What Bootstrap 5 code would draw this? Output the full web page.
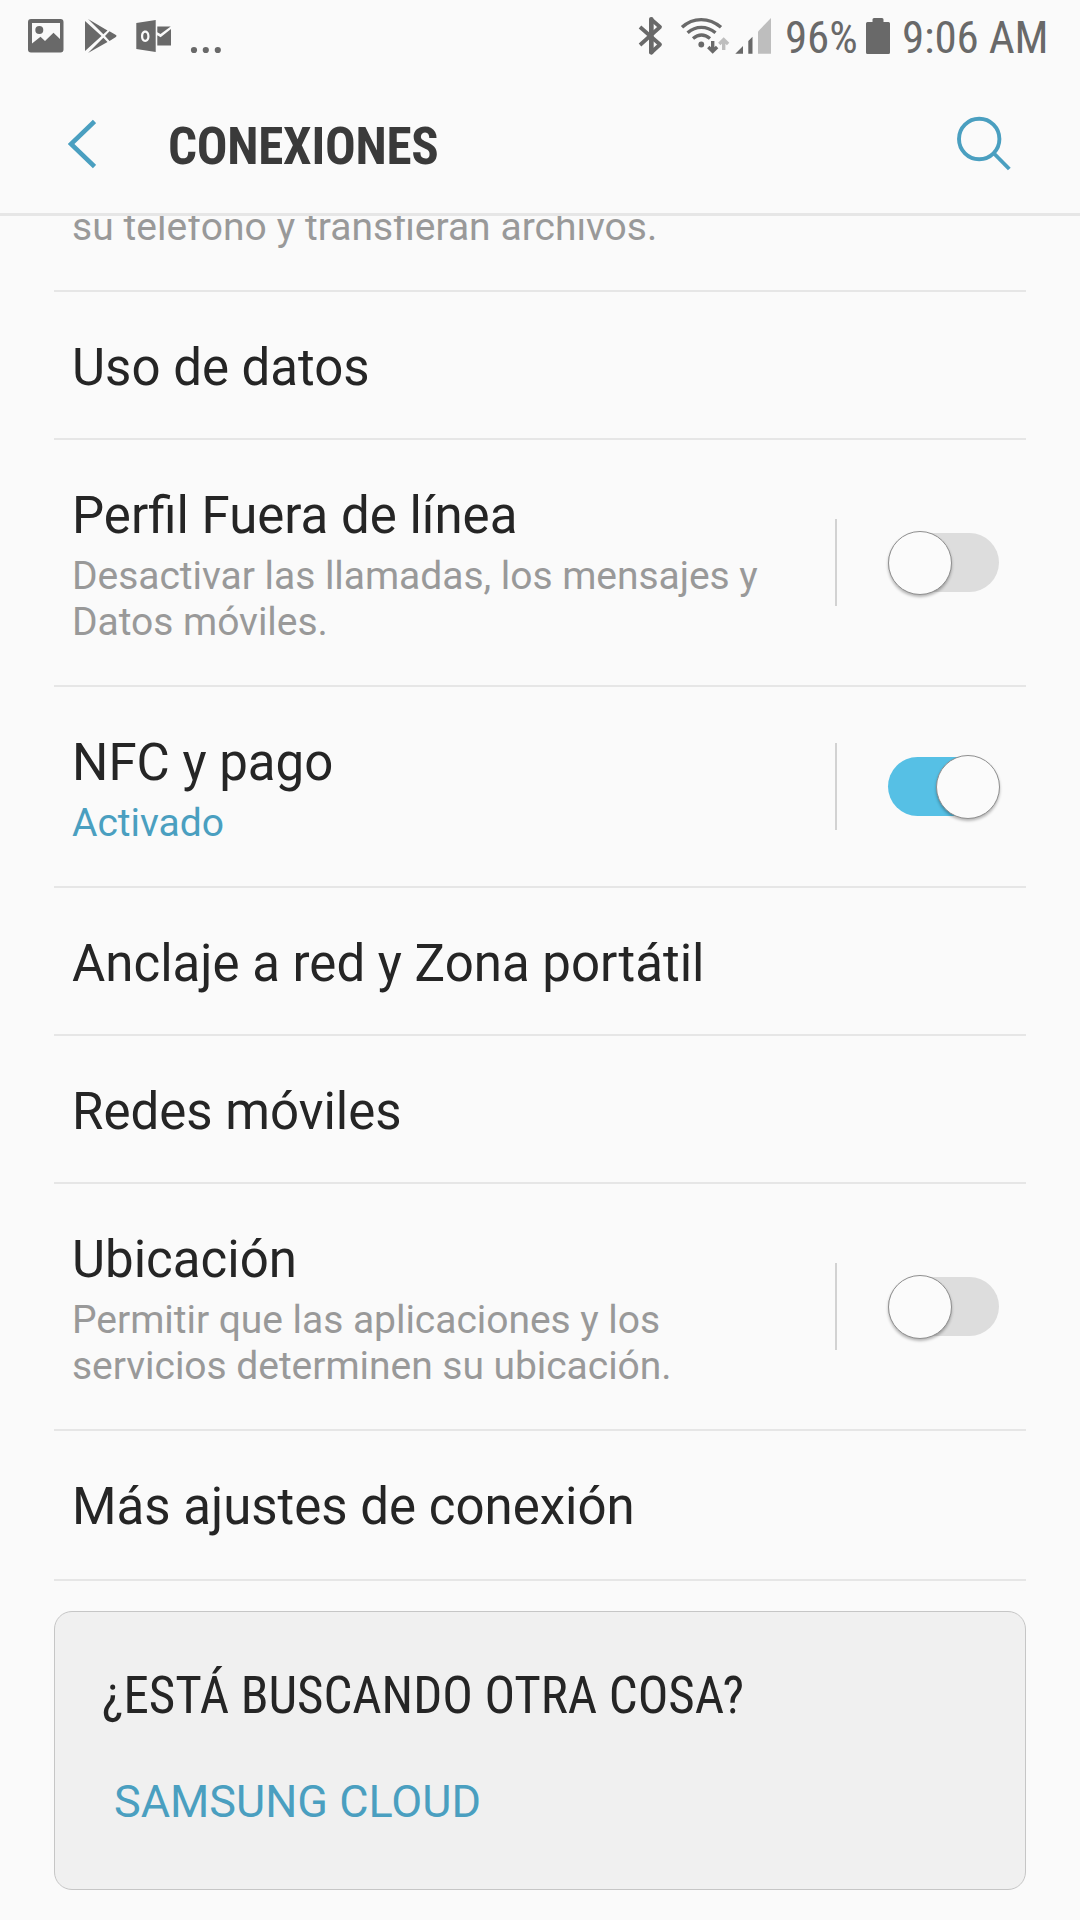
<!DOCTYPE html>
<html lang="es">
<head>
<meta charset="utf-8">
<meta name="viewport" content="width=device-width, initial-scale=1">
<title>Conexiones</title>
<link rel="stylesheet" href="https://cdn.jsdelivr.net/npm/bootstrap@5.3.0/dist/css/bootstrap.min.css">
<style>
  body { width: 1080px; height: 1920px; background: #fafafa; color: #252525; font-family: Roboto, "Noto Sans", sans-serif; overflow: hidden; }
  svg { display: block; flex: none; }
  .condensed { font-family: "Roboto Condensed", Roboto, sans-serif; font-stretch: 75%; white-space: nowrap; }
  .statusbar { height: 72px; color: #696969; padding: 0 33px 0 28px; }
  .status-text { font-size: 45px; line-height: 53px; padding-top: 11px; letter-spacing: -.15px; }
  .w-pct { width: 73px; margin-left: 13px; }
  .w-time { width: 145px; margin-left: 12px; }
  .battery { margin-left: 8px; }
  .appbar { height: 144px; border-bottom: 3px solid #e6e6e6; padding: 0 68px; }
  .appbar h1 { font-size: 51px; line-height: 59px; font-weight: 700; color: #3a3a3a; margin: 45px 0 0 72px; letter-spacing: -.25px; }
  .settings { padding: 0 54px; }
  .setting { border-bottom: 2px solid #e6e6e6; padding: 0 26px 0 18px; }
  .clipped { height: 76px; overflow: hidden; }
  .clipped .label-sub { margin-top: -12px; letter-spacing: 0; word-spacing: .25px; }
  .h-one { height: 148px; }
  .h-two { height: 201px; }
  .h-three { height: 247px; }
  .h-last { height: 150px; }
  .labels { align-self: flex-start; padding-top: 46px; }
  .label-main { font-size: 51px; line-height: 59px; margin-bottom: 8px; white-space: nowrap; }
  .label-sub { font-size: 39px; line-height: 46px; color: #999; white-space: nowrap; letter-spacing: -.04px; }
  .label-on { color: #4a9fc0; }
  .rule { width: 2px; height: 87px; background: #d2d2d2; margin-right: 51px; }
  .toggle { position: relative; width: 112px; height: 64px; }
  .toggle::before { content: ""; position: absolute; inset: 2px 1px 3px 0; border-radius: 30px; background: #ddd; }
  .toggle::after { content: ""; position: absolute; left: 0; top: 0; width: 64px; height: 64px; border-radius: 50%; background: #fbfbfb; border: 1px solid #8f8f8f; box-shadow: 0 2px 3px rgba(0,0,0,.28); }
  .toggle.is-on::before { background: #56c0e5; }
  .toggle.is-on::after { left: 48px; }
  .suggest { margin: 30px 54px 0; height: 279px; background: #f0f0f0; border: 1px solid #c6c6c6; border-radius: 18px; padding: 54px 47px 0; }
  .suggest h2 { font-size: 51px; line-height: 59px; font-weight: 400; margin: 0; letter-spacing: -.06px; }
  .suggest a { font-size: 45px; line-height: 53px; color: #4a9fc0; margin: 50px 0 0 12px; }
</style>
<script src="https://cdn.jsdelivr.net/npm/bootstrap@5.3.0/dist/js/bootstrap.bundle.min.js" defer></script>
</head>
<body>
<div class="statusbar d-flex align-items-start">
  <svg width="200" height="72" viewBox="28 0 200 72" fill="#696969">
    <path fill-rule="evenodd" d="M31 19h29.500a3 3 0 0 1 3 3v27.500a3 3 0 0 1-3 3H31a3 3 0 0 1-3-3V22a3 3 0 0 1 3-3zM32 23v20.500l8.500-6.800 4.500 4.300 8.500-8.300 6.500 6.300V23z"/>
    <circle cx="39.300" cy="30" r="4"/>
    <path d="M85 21L101.500 36 85 51zM88 19L107.500 30.500 103.300 34.300zM88 53L107.500 42 103.300 37.800zM109.500 31.300L115.500 34.800Q117.500 36 115.500 37.300L109.500 41 105 36z"/>
    <path fill-rule="evenodd" d="M136.300 23L155.700 20V52L136.300 49zM145.200 30.500c-2.700 0-4.200 2.600-4.200 5.800s1.500 5.700 4.200 5.700 4.300-2.500 4.300-5.700-1.600-5.800-4.300-5.800zm0 2.300c1.400 0 2.100 1.500 2.100 3.500s-.7 3.400-2.100 3.400-2-1.400-2-3.400.6-3.500 2-3.500z"/>
    <path d="M157.300 26.500h13.400L160.500 34l-3.200-1.700zM157.300 35.300l3.300 2L171 29v16.500h-13.700z"/>
    <circle cx="194" cy="50" r="3.100"/><circle cx="205.800" cy="50" r="3.100"/><circle cx="217.800" cy="50" r="3.100"/>
  </svg>
  <svg class="ms-auto" width="136" height="72" viewBox="636 0 136 72" fill="none" stroke="#696969">
    <path stroke-width="3.800" stroke-linejoin="round" d="M640 27L660 44.500 651.300 52.500V19.300L660 27 640 45"/>
    <path stroke-width="4.600" stroke-linecap="round" d="M651.300 19.300v33"/>
    <path stroke-width="3.400" d="M682 27.300C693 17 709 17 721 27.300M687.600 32.800C696 25.500 706.500 25.500 715.500 32.800M693 38.500C698.500 34 704.500 34 710 38.500"/>
    <circle cx="701.300" cy="44.500" r="2.900" fill="#696969" stroke="none"/>
    <path stroke-width="3.400" d="M712.700 41v11M708.300 47l4.400 4.400 4.400-4.400"/>
    <path stroke="#bebebe" stroke-width="3.400" d="M723.700 50V40M719.300 44l4.400-4.400 4.400 4.400"/>
    <path fill="#696969" stroke="none" d="M735.300 53.700L743 46v7.700zM748.300 41l4.200-4.200v16.900h-4.200z"/>
    <path fill="#bebebe" stroke="none" d="M758 31.500L771 18v35.700h-13z"/>
  </svg>
  <div class="status-text condensed w-pct">96%</div>
  <svg class="battery" width="24" height="72" viewBox="866 0 24 72" fill="#696969"><path d="M874 18h8q1.500 0 1.500 1.500V22h5q1.500 0 1.500 1.500v29q0 1.500-1.500 1.500h-21q-1.500 0-1.500-1.500v-29q0-1.500 1.500-1.500h5v-2.500Q872.500 18 874 18z"/></svg>
  <div class="status-text condensed w-time">9:06 AM</div>
</div>
<header class="appbar d-flex align-items-start">
  <svg width="28" height="144" viewBox="68 72 28 144" fill="none" stroke="#4a9fc0" stroke-width="4.600"><path d="M94.500 121.500L71 144l23.500 22.500"/></svg>
  <h1 class="condensed">CONEXIONES</h1>
  <svg class="ms-auto" width="56" height="144" viewBox="956 72 56 144" fill="none" stroke="#4a9fc0" stroke-width="3.900"><circle cx="979.200" cy="139" r="20.200"/><path d="M994 153.500L1009.300 169"/></svg>
</header>
<main class="settings">
  <div class="setting clipped"><div class="label-sub">su teléfono y transfieran archivos.</div></div>
  <div class="setting h-one d-flex align-items-center"><div class="labels"><div class="label-main">Uso de datos</div></div></div>
  <div class="setting h-three d-flex align-items-center">
    <div class="labels flex-grow-1"><div class="label-main">Perfil Fuera de línea</div><div class="label-sub">Desactivar las llamadas, los mensajes y<br>Datos móviles.</div></div>
    <div class="rule"></div><div class="toggle" role="switch" aria-checked="false"></div>
  </div>
  <div class="setting h-two d-flex align-items-center">
    <div class="labels flex-grow-1"><div class="label-main">NFC y pago</div><div class="label-sub label-on">Activado</div></div>
    <div class="rule"></div><div class="toggle is-on" role="switch" aria-checked="true"></div>
  </div>
  <div class="setting h-one d-flex align-items-center"><div class="labels"><div class="label-main">Anclaje a red y Zona portátil</div></div></div>
  <div class="setting h-one d-flex align-items-center"><div class="labels"><div class="label-main">Redes móviles</div></div></div>
  <div class="setting h-three d-flex align-items-center">
    <div class="labels flex-grow-1"><div class="label-main">Ubicación</div><div class="label-sub">Permitir que las aplicaciones y los<br>servicios determinen su ubicación.</div></div>
    <div class="rule"></div><div class="toggle" role="switch" aria-checked="false"></div>
  </div>
  <div class="setting h-last d-flex align-items-center"><div class="labels"><div class="label-main">Más ajustes de conexión</div></div></div>
</main>
<section class="suggest d-flex flex-column align-items-start">
  <h2 class="condensed">¿ESTÁ BUSCANDO OTRA COSA?</h2>
  <a class="text-decoration-none" href="#">SAMSUNG CLOUD</a>
</section>
</body>
</html>
